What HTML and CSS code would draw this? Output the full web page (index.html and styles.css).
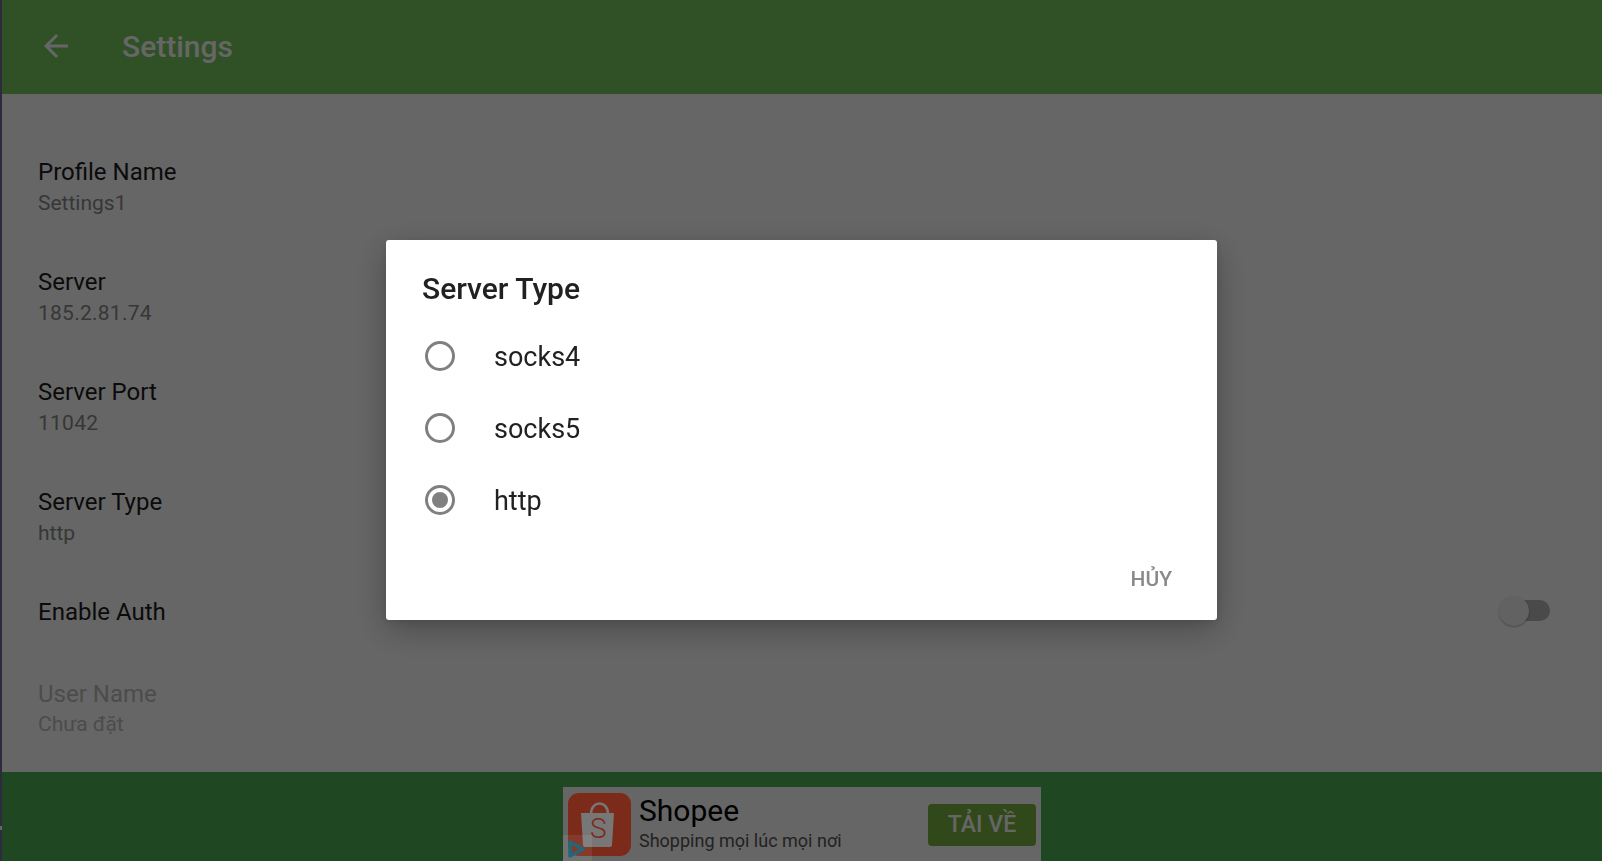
FILE: index.html
```html
<!DOCTYPE html>
<html lang="vi">
<head>
<meta charset="utf-8">
<title>Settings</title>
<link rel="stylesheet" href="styles.css">
</head>
<body>
<div class="app">
  <header class="toolbar">
    <svg class="back" viewBox="0 0 24 24" width="36" height="36"><path d="M20 11H7.830l5.590-5.590L12 4l-8 8 8 8 1.410-1.410L7.830 13H20v-2z"/></svg>
    <h1 class="toolbar-title">Settings</h1>
  </header>
  <main class="list">
    <div class="row"><div class="row-title">Profile Name</div><div class="row-sub">Settings1</div></div>
    <div class="row"><div class="row-title">Server</div><div class="row-sub row-num">185.2.81.74</div></div>
    <div class="row"><div class="row-title">Server Port</div><div class="row-sub row-num">11042</div></div>
    <div class="row"><div class="row-title">Server Type</div><div class="row-sub">http</div></div>
    <div class="row row-single">
      <div class="row-title">Enable Auth</div>
      <div class="switch"><span class="switch-thumb"></span></div>
    </div>
    <div class="row row-disabled"><div class="row-title">User Name</div><div class="row-sub">Chưa đặt</div></div>
  </main>
  <footer class="adbar">
    <div class="ad">
      <div class="ad-icon">
        <svg viewBox="0 0 63 63" width="63" height="63">
          <path class="bag-handle" d="M23 21c0-14 17-14 17 0"/>
          <path class="bag" d="M13 20h33l-2 32c0 1-1 2-2 2H17c-1 0-2-1-2-2z"/>
        </svg>
        <span class="ad-s">S</span>
      </div>
      <div class="ad-text">
        <div class="ad-name">Shopee</div>
        <div class="ad-desc">Shopping mọi lúc mọi nơi</div>
      </div>
      <div class="ad-btn">TẢI VỀ</div>
      <div class="ad-badge">
        <svg viewBox="0 0 29 26" width="29" height="26"><path d="M7 7l13 7-13 7z"/></svg>
      </div>
    </div>
  </footer>
</div>
<div class="edge-mark"></div>
<div class="scrim"></div>
<div class="dialog-wrap">
  <section class="dialog">
    <h2 class="dialog-title">Server Type</h2>
    <ul class="options">
      <li class="option"><span class="radio"></span><span class="option-label">socks4</span></li>
      <li class="option"><span class="radio"></span><span class="option-label">socks5</span></li>
      <li class="option"><span class="radio radio-on"></span><span class="option-label">http</span></li>
    </ul>
    <div class="actions"><span class="cancel">HỦY</span></div>
  </section>
</div>
</body>
</html>
```
FILE: styles.css
```css
* { box-sizing: border-box; }
html, body { margin: 0; height: 100%; overflow: hidden; }
body { font-family: Roboto, "Noto Sans", sans-serif; background: #fff; color: #1a1a1a; }
.app { height: 861px; display: flex; flex-direction: column; border-left: 2px solid #706d98; overflow: hidden; }
.toolbar { height: 94px; flex: none; display: flex; align-items: center; background: #76ca5c; color: #fff; padding: 0 0 2px 36px; }
.back { fill: #fff; flex: none; }
.toolbar-title { margin: 0 0 0 48px; font-size: 30px; font-weight: 500; }
.list { flex: 1; min-height: 0; overflow: hidden; padding-top: 38px; background: #fff; }
.row { height: 110px; padding: 24px 52px 0 36px; }
.row-single { height: 80px; padding-top: 24px; display: flex; justify-content: space-between; }
.row-title { font-size: 24px; line-height: 32px; color: #1c1c1c; }
.row-sub { font-size: 21px; line-height: 30px; color: #8a8a8a; }
.row-num { letter-spacing: .25px; }
.row-disabled { padding-top: 26px; }
.row-disabled .row-title { color: #bdbdbd; }
.row-disabled .row-sub { color: #bdbdbd; line-height: 29px; }
.switch { position: relative; width: 44px; height: 21px; margin-top: 4px; border-radius: 11px; background: #b8b8b8; }
.switch-thumb { position: absolute; left: -7px; top: -4px; width: 30px; height: 30px; border-radius: 50%; background: #f6f6f6; box-shadow: 0 1px 2px rgba(0,0,0,.3); }
.adbar { height: 89px; flex: none; background: #4fb355; padding-top: 15px; display: flex; justify-content: center; }
.ad { position: relative; width: 478px; height: 74px; background: #fff; display: flex; align-items: flex-start; padding: 6px 5px 0; }
.ad-icon { position: relative; z-index: 1; width: 63px; height: 63px; flex: none; border-radius: 11px; background: #7c2a19; }
.ad-icon svg { display: block; }
.bag { fill: #777; }
.bag-handle { fill: none; stroke: #777; stroke-width: 2.500; }
.ad-s { position: absolute; left: 22px; top: 18px; font-size: 28px; line-height: 36px; color: #7c2a19; font-weight: 300; }
.ad-text { flex: 1; margin-left: 8px; }
.ad-name { font-size: 30px; line-height: 36px; color: #000; }
.ad-desc { font-size: 18px; line-height: 24px; color: #555; }
.ad-btn { width: 108px; height: 42px; margin-top: 11px; padding-bottom: 2px; border-radius: 4px; background: #7cb342; color: #fff; font-size: 23px; font-weight: 500; display: flex; align-items: center; justify-content: center; }
.ad-badge { position: absolute; z-index: 1; left: 0; bottom: 0; width: 29px; height: 26px; background: rgba(255,255,255,.08); }
.ad-badge svg { display: block; fill: none; stroke: #23687a; stroke-width: 3.500; stroke-linejoin: round; }
.edge-mark { position: absolute; left: 0; top: 826px; width: 2px; height: 4px; background: #fff; }
.scrim { position: fixed; inset: 0; background: rgba(0,0,0,.6); }
.dialog-wrap { position: fixed; z-index: 2; left: 386px; top: 240px; }
.dialog { width: 831px; height: 380px; background: #fff; border-radius: 3px; box-shadow: 0 10px 34px rgba(0,0,0,.28), 0 3px 10px rgba(0,0,0,.1); padding: 31px 0 0 36px; display: flex; flex-direction: column; }
.dialog-title { margin: 0; font-size: 30px; line-height: 36px; font-weight: 500; color: #212121; }
.options { list-style: none; margin: 13px 0 0; padding: 0; }
.option { height: 72px; display: flex; align-items: center; font-size: 27px; color: #212121; }
.option-label { padding-top: 2px; }
.radio { position: relative; width: 30px; height: 30px; margin: 0 39px 0 3px; border: 3px solid #808080; border-radius: 50%; flex: none; }
.radio-on::after { content: ""; position: absolute; inset: 4px; border-radius: 50%; background: #808080; }
.actions { margin-top: auto; padding: 0 45px 27px 0; display: flex; justify-content: flex-end; }
.cancel { font-size: 21px; line-height: 28px; font-weight: 500; color: #8a8a8a; }
```
